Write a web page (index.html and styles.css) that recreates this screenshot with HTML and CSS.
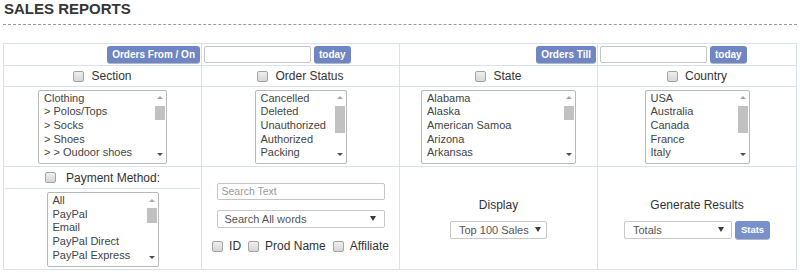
FILE: index.html
```html
<!DOCTYPE html>
<html>
<head>
<meta charset="utf-8">
<title>Sales Reports</title>
<link rel="stylesheet" href="styles.css">
</head>
<body>
<div class="page">
  <h1 class="title">SALES REPORTS</h1>

  <div class="report">
    <!-- row 1 : dates -->
    <div class="cell cell-end"><button class="btn">Orders From / On</button></div>
    <div class="cell cell-start"><input class="date" type="text"><button class="btn">today</button></div>
    <div class="cell cell-end"><button class="btn">Orders Till</button></div>
    <div class="cell cell-start"><input class="date" type="text"><button class="btn">today</button></div>

    <!-- row 2 : headings -->
    <div class="cell cell-head"><label class="chk"><input type="checkbox" class="cb">Section</label></div>
    <div class="cell cell-head"><label class="chk"><input type="checkbox" class="cb">Order Status</label></div>
    <div class="cell cell-head"><label class="chk"><input type="checkbox" class="cb">State</label></div>
    <div class="cell cell-head"><label class="chk"><input type="checkbox" class="cb">Country</label></div>

    <!-- row 3 : lists -->
    <div class="cell cell-center">
      <div class="listbox lb-section">
        <ul class="options">
          <li>Clothing</li><li>&gt; Polos/Tops</li><li>&gt; Socks</li><li>&gt; Shoes</li><li>&gt; &gt; Oudoor shoes</li>
        </ul>
        <div class="scrollbar"><span class="sb-up"></span><span class="sb-track"><span class="thumb thumb-s"></span></span><span class="sb-down"></span></div>
      </div>
    </div>
    <div class="cell cell-center">
      <div class="listbox lb-status">
        <ul class="options">
          <li>Cancelled</li><li>Deleted</li><li>Unauthorized</li><li>Authorized</li><li>Packing</li>
        </ul>
        <div class="scrollbar"><span class="sb-up"></span><span class="sb-track"><span class="thumb thumb-l"></span></span><span class="sb-down"></span></div>
      </div>
    </div>
    <div class="cell cell-center">
      <div class="listbox lb-state">
        <ul class="options">
          <li>Alabama</li><li>Alaska</li><li>American Samoa</li><li>Arizona</li><li>Arkansas</li>
        </ul>
        <div class="scrollbar"><span class="sb-up"></span><span class="sb-track"><span class="thumb thumb-s"></span></span><span class="sb-down"></span></div>
      </div>
    </div>
    <div class="cell cell-center">
      <div class="listbox lb-country">
        <ul class="options">
          <li>USA</li><li>Australia</li><li>Canada</li><li>France</li><li>Italy</li>
        </ul>
        <div class="scrollbar"><span class="sb-up"></span><span class="sb-track"><span class="thumb thumb-l"></span></span><span class="sb-down"></span></div>
      </div>
    </div>

    <!-- row 4 -->
    <div class="cell cell-payment">
      <div class="pay-head"><label class="chk chk-wide"><input type="checkbox" class="cb">Payment Method:</label></div>
      <div class="listbox lb-payment">
        <ul class="options">
          <li>All</li><li>PayPal</li><li>Email</li><li>PayPal Direct</li><li>PayPal Express</li>
        </ul>
        <div class="scrollbar"><span class="sb-up"></span><span class="sb-track"><span class="thumb thumb-p"></span></span><span class="sb-down"></span></div>
      </div>
    </div>
    <div class="cell cell-stack">
      <input class="search" type="text" placeholder="Search Text">
      <div class="dropdown dd-search"><span>Search All words</span><span class="caret"></span></div>
      <div class="checks">
        <label class="chk chk-inline"><input type="checkbox" class="cb">ID</label>
        <label class="chk chk-inline"><input type="checkbox" class="cb">Prod Name</label>
        <label class="chk chk-inline"><input type="checkbox" class="cb">Affiliate</label>
      </div>
    </div>
    <div class="cell cell-stack">
      <div class="caption">Display</div>
      <div class="dropdown dd-display"><span>Top 100 Sales</span><span class="caret"></span></div>
    </div>
    <div class="cell cell-stack">
      <div class="caption">Generate Results</div>
      <div class="gen-row">
        <div class="dropdown dd-totals"><span>Totals</span><span class="caret"></span></div>
        <button class="btn btn-stats">Stats</button>
      </div>
    </div>
  </div>
</div>
</body>
</html>
```

FILE: styles.css
```css
* { box-sizing: border-box; }

body {
  margin: 0;
  background: #fff;
  font-family: "Liberation Sans", Arial, sans-serif;
  color: #333;
}

.page {
  padding: 0 0 0 3px;
}

.title {
  width: 794px;
  margin: 0;
  padding: 0 0 6px 1px;
  font-size: 15px;
  line-height: 18px;
  font-weight: bold;
  color: #363636;
  border-bottom: 1px dashed #9a9a9a;
}

.report {
  margin-top: 18px;
  width: 794px;
  display: grid;
  grid-template-columns: 198px 198px 198px 199px;
  grid-template-rows: 22px 21px 80px 103px;
  border-left: 1px solid #d9e0f0;
  border-top: 1px solid #d9e0f0;
}

.cell {
  border-right: 1px solid #d9e0f0;
  border-bottom: 1px solid #d9e0f0;
  min-width: 0;
}

.cell-end {
  display: flex;
  justify-content: flex-end;
  align-items: center;
  padding-right: 1px;
}

.cell-start {
  display: flex;
  align-items: center;
  gap: 3px;
  padding-left: 2px;
}

.cell-head,
.cell-center {
  display: flex;
  justify-content: center;
  align-items: center;
}

.btn {
  height: 17px;
  padding: 0 5px;
  border: 0;
  border-radius: 3px;
  background: #6f86c2;
  color: #fff;
  font-family: "Liberation Sans", Arial, sans-serif;
  font-weight: bold;
  font-size: 10px;
  line-height: 17px;
  box-shadow: 0 1px 0 rgba(40, 50, 90, 0.35);
}

.date {
  width: 107px;
  height: 17px;
  border: 1px solid #c4c4c4;
  border-radius: 2px;
  padding: 0 3px;
  background: #fff;
}

.chk {
  display: flex;
  align-items: center;
  font-size: 12px;
  line-height: 14px;
  color: #333;
}

.cb {
  appearance: none;
  -webkit-appearance: none;
  width: 11px;
  height: 11px;
  margin: 0 7px 0 0;
  border: 1px solid #a4a4a4;
  border-radius: 2px;
  background: linear-gradient(#efefef, #d6d6d6);
  flex: none;
}

.chk-wide .cb { margin-right: 10px; }

/* list boxes */
.listbox {
  display: flex;
  height: 74px;
  border: 1px solid #b9b9b9;
  border-radius: 2px;
  background: #fff;
  overflow: hidden;
}

.lb-section { width: 129px; }
.lb-status { width: 92px; }
.lb-state { width: 155px; }
.lb-country { width: 105px; }
.lb-payment { width: 112px; height: 75px; margin-top: 3px; }

.options {
  flex: 1;
  margin: 0;
  padding: 1px 0 0 5px;
  list-style: none;
  font-size: 11px;
  line-height: 13.7px;
  color: #444;
  white-space: nowrap;
  overflow: hidden;
}

.scrollbar {
  width: 13px;
  display: flex;
  flex-direction: column;
  flex: none;
}

.sb-up,
.sb-down {
  height: 14px;
  display: flex;
  justify-content: center;
  align-items: center;
  padding-left: 1px;
}

.sb-up::before {
  content: "";
  border-left: 3px solid transparent;
  border-right: 3px solid transparent;
  border-bottom: 3px solid #a8a8a8;
}

.sb-down {
  align-items: flex-start;
  padding-top: 4px;
}

.sb-down::before {
  content: "";
  border-left: 3px solid transparent;
  border-right: 3px solid transparent;
  border-top: 3px solid #505050;
}

.sb-track {
  flex: 1;
  padding: 1px 1px 0 2px;
}

.thumb {
  display: block;
  width: 10px;
  background: #c1c1c1;
}

.thumb-s { height: 14px; }
.thumb-l { height: 27px; }
.thumb-p { height: 15px; }

/* row 4 */
.cell-payment {
  display: flex;
  flex-direction: column;
  align-items: center;
}

.pay-head {
  align-self: stretch;
  margin: 0 1px;
  height: 22px;
  border-bottom: 1px solid #d9e0f0;
  display: flex;
  justify-content: center;
  align-items: center;
}

.cell-stack {
  display: flex;
  flex-direction: column;
  justify-content: center;
  align-items: center;
}

.search {
  width: 168px;
  height: 17px;
  border: 1px solid #c4c4c4;
  border-radius: 2px;
  padding: 0 4px;
  font-family: "Liberation Sans", Arial, sans-serif;
  font-size: 10.5px;
  color: #555;
}

.search::placeholder { color: #999; }

.dropdown {
  display: flex;
  align-items: center;
  justify-content: space-between;
  height: 18px;
  padding: 0 7px 0 7px;
  border: 1px solid #c8c8c8;
  border-radius: 2px;
  background: #fff;
  font-size: 11px;
  color: #555;
  white-space: nowrap;
}

.caret {
  width: 0;
  height: 0;
  border-left: 3px solid transparent;
  border-right: 3px solid transparent;
  border-top: 5px solid #3a3a3a;
}

.dd-search { width: 168px; margin-top: 10px; padding-right: 8px; }
.dd-display { width: 97px; margin-top: 9px; padding-left: 8px; padding-right: 5px; }
.dd-totals { width: 108px; padding-left: 8px; padding-right: 7px; }

.checks {
  display: flex;
  align-items: center;
  margin-top: 11px;
  height: 15px;
}

.chk-inline .cb { margin-right: 6px; }
.chk-inline { margin-right: 7px; }
.chk-inline:last-child { margin-right: 0; }

.caption {
  font-size: 12px;
  line-height: 14px;
  color: #333;
}

.gen-row {
  display: flex;
  align-items: center;
  gap: 3px;
  margin-top: 9px;
}

.btn-stats {
  width: 35px;
  height: 18px;
  padding: 0;
  font-size: 9.5px;
  line-height: 18px;
  background: #7891ca;
}
```
